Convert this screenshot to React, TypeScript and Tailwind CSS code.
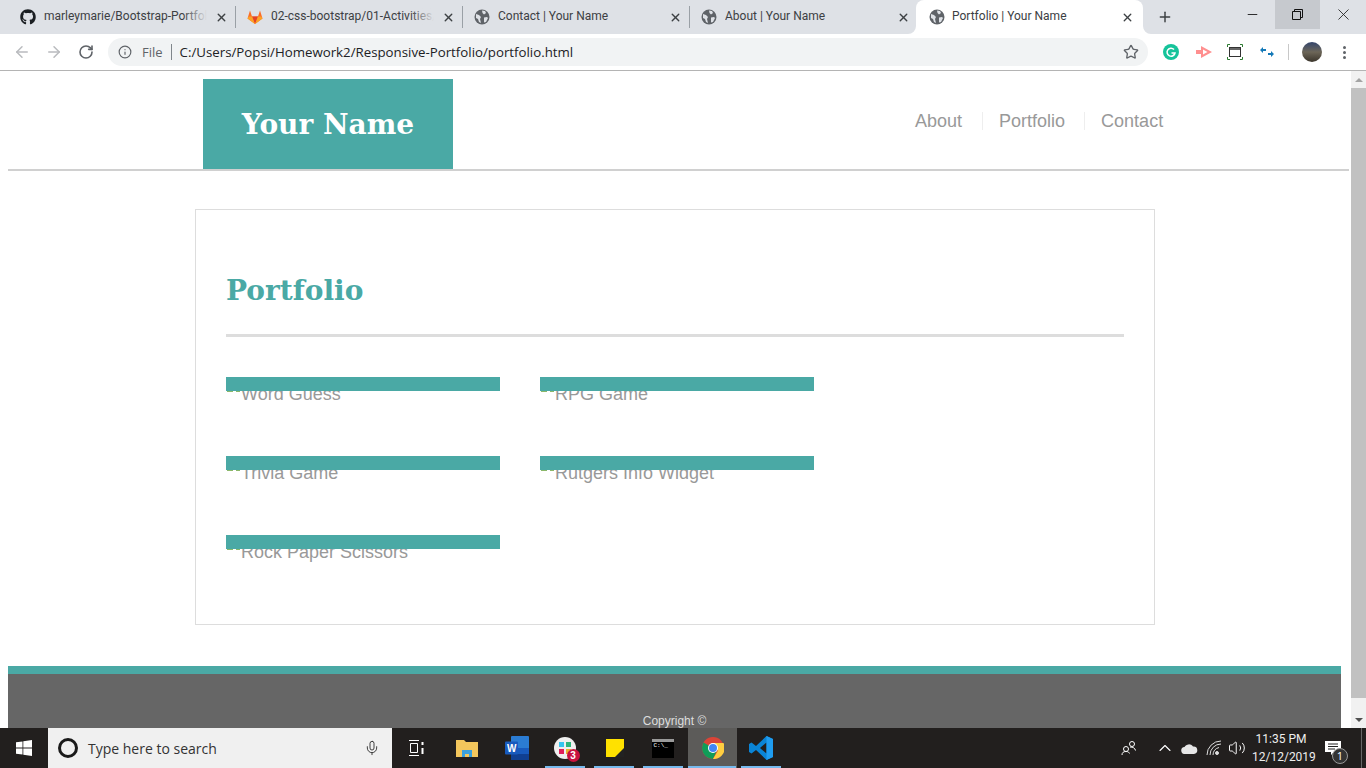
import { FaGithub } from 'react-icons/fa'
import { ArrowLeft, ArrowRight, RotateCw, Info, Star, X, Plus, Minus, Mic, ChevronUp, Volume2 } from 'lucide-react'

const tabs = [
  { title: 'marleymarie/Bootstrap-Portfolio', icon: 'github', fade: true, sep: true },
  { title: '02-css-bootstrap/01-Activities/', icon: 'gitlab', fade: true, sep: true },
  { title: 'Contact | Your Name', icon: 'globe', sep: true },
  { title: 'About | Your Name', icon: 'globe' },
]

const projects = ['Word Guess', 'RPG Game', 'Trivia Game', 'Rutgers Info Widget', 'Rock Paper Scissors']

function Globe() {
  return (
    <svg width="16" height="16" viewBox="0 0 16 16" className="shrink-0">
      <circle cx="8" cy="8" r="7.5" fill="#5f6368" />
      <path d="M2 5l3 1 2 2-1 2 1 4-2-1-1-3-2-1zM8 1.5l3 .5 1 2-2 1.500-1.500-1.500zM10 8.500l3-.5 1 1-2 4-2 .5z" fill="#dee1e6" />
    </svg>
  )
}

function Gitlab() {
  return (
    <svg width="16" height="16" viewBox="0 0 16 16" className="shrink-0">
      <path d="M8 15L.5 9.500 3 1.500l2 6h6l2-6 2.500 8z" fill="#fc6d26" />
      <path d="M8 15L5 7.500h6z" fill="#e24329" />
      <path d="M.5 9.500L8 15 5 7.500H1.800z" fill="#fca326" />
      <path d="M15.500 9.500L8 15l3-7.500h3.200z" fill="#fca326" />
    </svg>
  )
}

function Tab({ title, icon, fade, sep }: { title: string; icon: string; fade?: boolean; sep?: boolean }) {
  return (
    <div className={`w-[227px] h-[22px] shrink-0 flex items-center pl-[11px] pr-[7px] ${sep ? 'border-r border-[#9aa0a6]' : ''}`}>
      {icon === 'github' && <FaGithub size={16} className="shrink-0 text-[#1b1f23]" />}
      {icon === 'gitlab' && <Gitlab />}
      {icon === 'globe' && <Globe />}
      <div className="relative ml-2 mb-[2px] w-[163px] overflow-hidden whitespace-nowrap text-[12px] text-[#3c4043] font-['Roboto',sans-serif]">
        {title}
        {fade && <div className="absolute right-0 top-0 bottom-0 w-6 bg-gradient-to-r from-transparent to-[#dee1e6]" />}
      </div>
      <X size={13} strokeWidth={2.5} className="ml-auto text-[#3c4043]" />
    </div>
  )
}

function Project({ name }: { name: string }) {
  return (
    <div className="relative w-[274px] h-[65px] text-[18px] leading-[26px] text-[#999999]">
      <div className="absolute left-0 top-0 right-0 h-[14px] bg-[#4aa9a5]" />
      <div className="flex items-start pt-[4px]">
        <svg width="15" height="16" viewBox="0 0 15 16" className="shrink-0">
          <path d="M1 10h6v1H1zM10 10h4v1h-4z" fill="#8bb86a" />
        </svg>
        <span>{name}</span>
      </div>
    </div>
  )
}

function Chrome() {
  return (
    <svg width="22" height="22" viewBox="0 0 22 22">
      <circle cx="11" cy="11" r="11" fill="#db4437" />
      <path d="M11 11L1.500 5.500A11 11 0 0 0 11 22l5-11z" fill="#0f9d58" />
      <path d="M11 6h10.500A11 11 0 0 1 11 22l5-8.500z" fill="#ffcd40" />
      <circle cx="11" cy="11" r="5" fill="#fff" />
      <circle cx="11" cy="11" r="4" fill="#4285f4" />
    </svg>
  )
}

function TaskIcon({ children, active }: { children: React.ReactNode; active?: boolean }) {
  return (
    <div className={`relative w-[49px] h-10 flex items-center justify-center ${active ? 'bg-[#5c5b59]' : ''}`}>
      {children}
      <div className={`absolute bottom-0 h-[2px] bg-[#76b9ed] ${active ? 'left-0 right-px' : 'left-[4px] right-[5px]'}`} />
    </div>
  )
}

export default function App() {
  return (
    <div className="w-[1366px] h-[768px] overflow-hidden flex flex-col bg-white font-['Open_Sans',sans-serif]">
      {/* tab strip */}
      <div className="h-[34px] shrink-0 bg-[#dee1e6] flex items-center pl-[9px]">
        {tabs.map(t => <Tab key={t.title} {...t} />)}
        <div className="relative self-end ml-[-1px] w-[227px] h-[34px] flex items-center pl-[13px] pr-[9px] bg-white rounded-t-[8px]">
          <svg width="8" height="8" viewBox="0 0 8 8" className="absolute left-[-8px] bottom-0"><path d="M8 0v8H0a8 8 0 0 0 8-8z" fill="#fff" /></svg>
          <svg width="8" height="8" viewBox="0 0 8 8" className="absolute right-[-8px] bottom-0"><path d="M0 0v8h8a8 8 0 0 1-8-8z" fill="#fff" /></svg>
          <Globe />
          <span className="ml-[7px] mb-[2px] text-[12px] text-[#3c4043] font-['Roboto',sans-serif]">Portfolio | Your Name</span>
          <X size={13} strokeWidth={2.5} className="ml-auto text-[#3c4043]" />
        </div>
        <Plus size={16} strokeWidth={2.2} className="ml-[14px] text-[#3c4043]" />
        <div className="ml-auto self-start flex h-[29px]">
          <div className="w-[46px] flex items-center justify-center"><Minus size={15} strokeWidth={1.5} className="text-[#222]" /></div>
          <div className="w-[45px] flex items-center justify-center bg-[#c6c9ce]">
            <svg width="11" height="11" viewBox="0 0 11 11" fill="none" stroke="#111"><path d="M.5 2.500h8v8h-8zM2.500 2.500v-2h8v8h-2" /></svg>
          </div>
          <div className="w-[46px] flex items-center justify-center"><X size={19} strokeWidth={1.1} className="text-[#222]" /></div>
        </div>
      </div>

      {/* toolbar */}
      <div className="h-[37px] shrink-0 border-b border-[#b4b4b4] flex items-center pl-[13px]">
        <ArrowLeft size={18} className="text-[#b9bbbe]" />
        <ArrowRight size={18} className="ml-[14px] text-[#b9bbbe]" />
        <RotateCw size={16} strokeWidth={2.4} className="ml-[15px] text-[#5f6368]" />
        <div className="ml-[14px] w-[1040px] h-[28px] rounded-full bg-[#f1f3f4] flex items-center pl-[10px] pr-[9px]">
          <Info size={14} className="text-[#5f6368]" />
          <span className="ml-[10px] mt-[2px] text-[13px] text-[#5f6368]">File</span>
          <div className="ml-2 mr-[8px] w-px h-4 bg-[#80868b]" />
          <span className="mt-[2px] text-[13.27px] text-[#202124]">C:/Users/Popsi/Homework2/Responsive-Portfolio/portfolio.html</span>
          <Star size={16} className="ml-auto text-[#5f6368]" />
        </div>
        <svg width="16" height="16" viewBox="0 0 16 16" className="ml-[15px]">
          <circle cx="8" cy="8" r="8" fill="#15c39a" />
          <path d="M11 5.500A4 4 0 1 0 12 9H8.500" fill="none" stroke="#fff" strokeWidth="1.500" />
        </svg>
        <svg width="16" height="14" viewBox="0 0 16 14" className="ml-[17px]">
          <path d="M0 5h5V1l11 6-11 6V9H0z" fill="#ff8f8f" />
          <path d="M7 4.500L11.500 7 7 9.500z" fill="#fff" />
        </svg>
        <svg width="16" height="16" viewBox="0 0 16 16" fill="none" className="ml-[15px]">
          <path d="M.5 3V.5H3M13 .5h2.500V3M.5 13v2.500H3M13 15.500h2.500V13" stroke="#2e7d32" />
          <rect x="2.500" y="3.500" width="11" height="9" stroke="#333" />
          <path d="M2.500 5h11" stroke="#333" strokeWidth="1.500" />
        </svg>
        <svg width="14" height="10" viewBox="0 0 14 10" className="ml-[17px]">
          <path d="M0 3l3-3v2h3v2H3v2zM14 7l-3-3v2H8v2h3v2z" fill="#1479b8" />
        </svg>
        <div className="ml-[14px] w-px h-4 bg-[#c8c8c8]" />
        <div className="ml-[13px] w-5 h-5 rounded-full bg-gradient-to-b from-[#34456b] via-[#6d6658] to-[#3b352c]" />
        <div className="ml-[21px] flex flex-col gap-[2px]">
          <div className="w-[3px] h-[3px] rounded-full bg-[#5f6368]" />
          <div className="w-[3px] h-[3px] rounded-full bg-[#5f6368]" />
          <div className="w-[3px] h-[3px] rounded-full bg-[#5f6368]" />
        </div>
      </div>

      {/* page and scrollbar */}
      <div className="flex-1 min-h-0 flex font-['Liberation_Sans',sans-serif]">
        <div className="w-[1351px] shrink-0 overflow-hidden pl-2">
          <div className="h-[100px] w-[1341px] border-b-2 border-[#d0d0d0] pt-2 flex items-start pl-[195px]">
            <div className="w-[250px] h-[90px] pt-[2px] bg-[#4aa9a5] flex items-center justify-center text-white text-[28px] font-bold font-['DejaVu_Serif',serif]">
              Your Name
            </div>
            <div className="ml-[462px] mt-[33px] flex items-center text-[18px] leading-[26px] text-[#999999]">
              <span className="pr-5 border-r border-[#eeeeee] leading-[18px]">About</span>
              <span className="pl-[16px] pr-[19px] border-r border-[#eeeeee] leading-[18px]">Portfolio</span>
              <span className="pl-[16px] leading-[18px]">Contact</span>
            </div>
          </div>

          <div className="w-[960px] h-[416px] ml-[187px] mt-[38px] border border-[#dddddd] px-[30px]">
            <h1 className="mt-[61px] text-[28px] leading-[40px] font-bold text-[#4aa9a5] font-['DejaVu_Serif',serif]">Portfolio</h1>
            <div className="mt-[23px] h-[3px] bg-[#dddddd]" />
            <div className="mt-[40px] grid grid-cols-[274px_274px] gap-x-[40px] gap-y-[14px]">
              {projects.map(p => <Project key={p} name={p} />)}
            </div>
          </div>

          <div className="mt-[41px] w-[1333px] h-[100px] border-t-[8px] border-[#4aa9a5] bg-[#666666] pt-[38px] text-center text-[12px] leading-[18px] text-[#dddddd]">
            Copyright ©
          </div>
        </div>

        <div className="w-[15px] shrink-0 bg-[#f1f1f1] flex flex-col items-center">
          <div className="h-[17px] flex items-center justify-center">
            <div className="w-0 h-0 border-x-[4px] border-x-transparent border-b-[4px] border-b-[#a3a3a3]" />
          </div>
          <div className="w-[15px] h-[610px] bg-[#c1c1c1]" />
          <div className="mt-auto h-[17px] flex items-center justify-center">
            <div className="w-0 h-0 border-x-[4px] border-x-transparent border-t-[4px] border-t-[#505050]" />
          </div>
        </div>
      </div>

      {/* taskbar */}
      <div className="h-10 shrink-0 bg-[#221f1e] flex items-center text-white">
        <div className="w-12 flex justify-center">
          <svg width="16" height="16" viewBox="0 0 16 16" fill="#fff">
            <path d="M0 2.300l6.500-.9v6.200H0zM7.300 1.300L16 0v7.600H7.300zM0 8.400h6.500v6.200L0 13.700zM7.300 8.400H16V16l-8.700-1.300z" />
          </svg>
        </div>
        <div className="w-[344px] h-10 bg-[#f0f0f0] flex items-center pl-[10px] pr-[12px]">
          <div className="w-5 h-5 rounded-full border-[3px] border-[#1a1a1a]" />
          <span className="ml-[10px] text-[14px] text-[#333] font-['Open_Sans',sans-serif]">Type here to search</span>
          <Mic size={16} strokeWidth={1.4} className="ml-auto text-[#333]" />
        </div>
        <div className="w-[48px] flex justify-center">
          <svg width="17" height="16" viewBox="0 0 17 16" fill="none" stroke="#fff">
            <path d="M1 .5h10M1 15.500h10M2.500 3.500h7v9h-7z" />
            <path d="M14.500 2v3M14.500 8v6" strokeWidth="2" />
          </svg>
        </div>
        <div className="ml-[2px] flex items-center">
          <div className="w-[50px] flex justify-center">
            <svg width="22" height="18" viewBox="0 0 22 18">
              <path d="M0 1h8l2 2h12v15H0z" fill="#f3c65c" />
              <path d="M6 11h10v7h-3v-3H9v3H6z" fill="#3aa0dc" />
            </svg>
          </div>
          <div className="w-[49px] flex justify-center">
            <svg width="24" height="24" viewBox="0 0 24 24">
              <rect x="6" y="0" width="18" height="24" rx="1" fill="#2b7cd3" />
              <rect x="6" y="12" width="18" height="6" fill="#185abd" />
              <rect x="6" y="18" width="18" height="6" fill="#103f91" />
              <rect x="0" y="5.500" width="13" height="13" rx="1" fill="#185abd" />
              <text x="2" y="15.500" fontSize="10" fontWeight="700" fill="#fff" fontFamily="Liberation Sans">W</text>
            </svg>
          </div>
          <TaskIcon>
            <div className="relative w-[22px] h-[22px] mr-[2px] rounded-full bg-[#efefef] flex items-center justify-center">
              <div className="grid grid-cols-2 gap-[2px]">
                <div className="w-[5px] h-[5px] bg-[#36c5f0]" />
                <div className="w-[5px] h-[5px] bg-[#2eb67d]" />
                <div className="w-[5px] h-[5px] bg-[#e01e5a]" />
                <div className="w-[5px] h-[5px] bg-[#ecb22e]" />
              </div>
              <div className="absolute right-[-4px] bottom-[-3px] w-[13px] h-[13px] rounded-full bg-[#c8123f] text-white text-[10px] leading-[13px] font-bold text-center font-['Liberation_Sans',sans-serif]">3</div>
            </div>
          </TaskIcon>
          <TaskIcon>
            <svg width="18" height="18" viewBox="0 0 18 18">
              <path d="M0 0h18v18H0z" fill="#ffe100" />
              <path d="M9 18l9-9v9z" fill="#222" />
            </svg>
          </TaskIcon>
          <TaskIcon>
            <div className="w-[22px] h-[19px] mr-[2px] bg-black border-t-[3px] border-[#9a9a9a] pl-[2px] text-[6px] leading-[7px] text-white font-['Liberation_Mono',monospace]">C:\_</div>
          </TaskIcon>
          <TaskIcon active><Chrome /></TaskIcon>
          <TaskIcon>
            <svg width="24" height="24" viewBox="0 0 24 24" className="mr-[2px]">
              <path d="M17.500 0L24 3v18l-6.500 3L7 14l-4.500 3.500L0 16v-8l2.500-1.500L7 10z" fill="#0a84d6" />
              <path d="M17.500 6.500L11 12l6.500 5.500z" fill="#221f1e" />
              <path d="M17.500 0L24 3v18l-6.500 3z" fill="#1f9cf0" />
            </svg>
          </TaskIcon>
        </div>

        <div className="ml-auto flex items-center">
          <svg width="16" height="16" viewBox="0 0 16 16" fill="none" stroke="#fff" className="mr-[18px]">
            <circle cx="5" cy="9" r="2.500" /><circle cx="11" cy="4" r="2.500" />
            <path d="M1 15c0-2.500 1.500-3.500 4-3.500s3 1 3.500 2M9 7c3 0 5 1 5.500 3.500" />
          </svg>
          <ChevronUp size={20} strokeWidth={1.3} className="mr-[6px]" />
          <svg width="17" height="11" viewBox="0 0 17 11" className="mr-[8px]" fill="#e6e6e6">
            <path d="M4 11a3.500 3.500 0 0 1-.5-7A5 5 0 0 1 12 3.500 3.500 3.500 0 1 1 13 11z" />
          </svg>
          <svg width="16" height="16" viewBox="0 0 16 16" fill="none" stroke="#ddd" className="mr-[6px]">
            <path d="M1 15A14 14 0 0 1 15 1M4 15A11 11 0 0 1 15 4M7 15a8 8 0 0 1 6-7.500" />
            <circle cx="11" cy="13" r="1.500" fill="#ddd" />
          </svg>
          <Volume2 size={18} strokeWidth={1.3} className="mr-[6px]" />
          <div className="w-[58px] text-center text-[12px] leading-[18px] text-[#eeeeee] font-['Roboto',sans-serif]">
            <div>11:35 PM</div>
            <div>12/12/2019</div>
          </div>
          <div className="relative w-[46px] h-10 flex items-center justify-center">
            <svg width="16" height="14" viewBox="0 0 16 14"><path d="M0 0h16v11H9l-3 3v-3H0z" fill="#fff" /><path d="M3 3h10M3 5.500h10M3 8h7" stroke="#222" /></svg>
            <div className="absolute left-[22px] top-[20px] w-[16px] h-[16px] rounded-full bg-[#333] border border-[#999] text-[11px] leading-[14px] text-center">1</div>
          </div>
          <div className="ml-[5px] w-[5px] h-10 border-l border-[#666]" />
        </div>
      </div>
    </div>
  )
}
